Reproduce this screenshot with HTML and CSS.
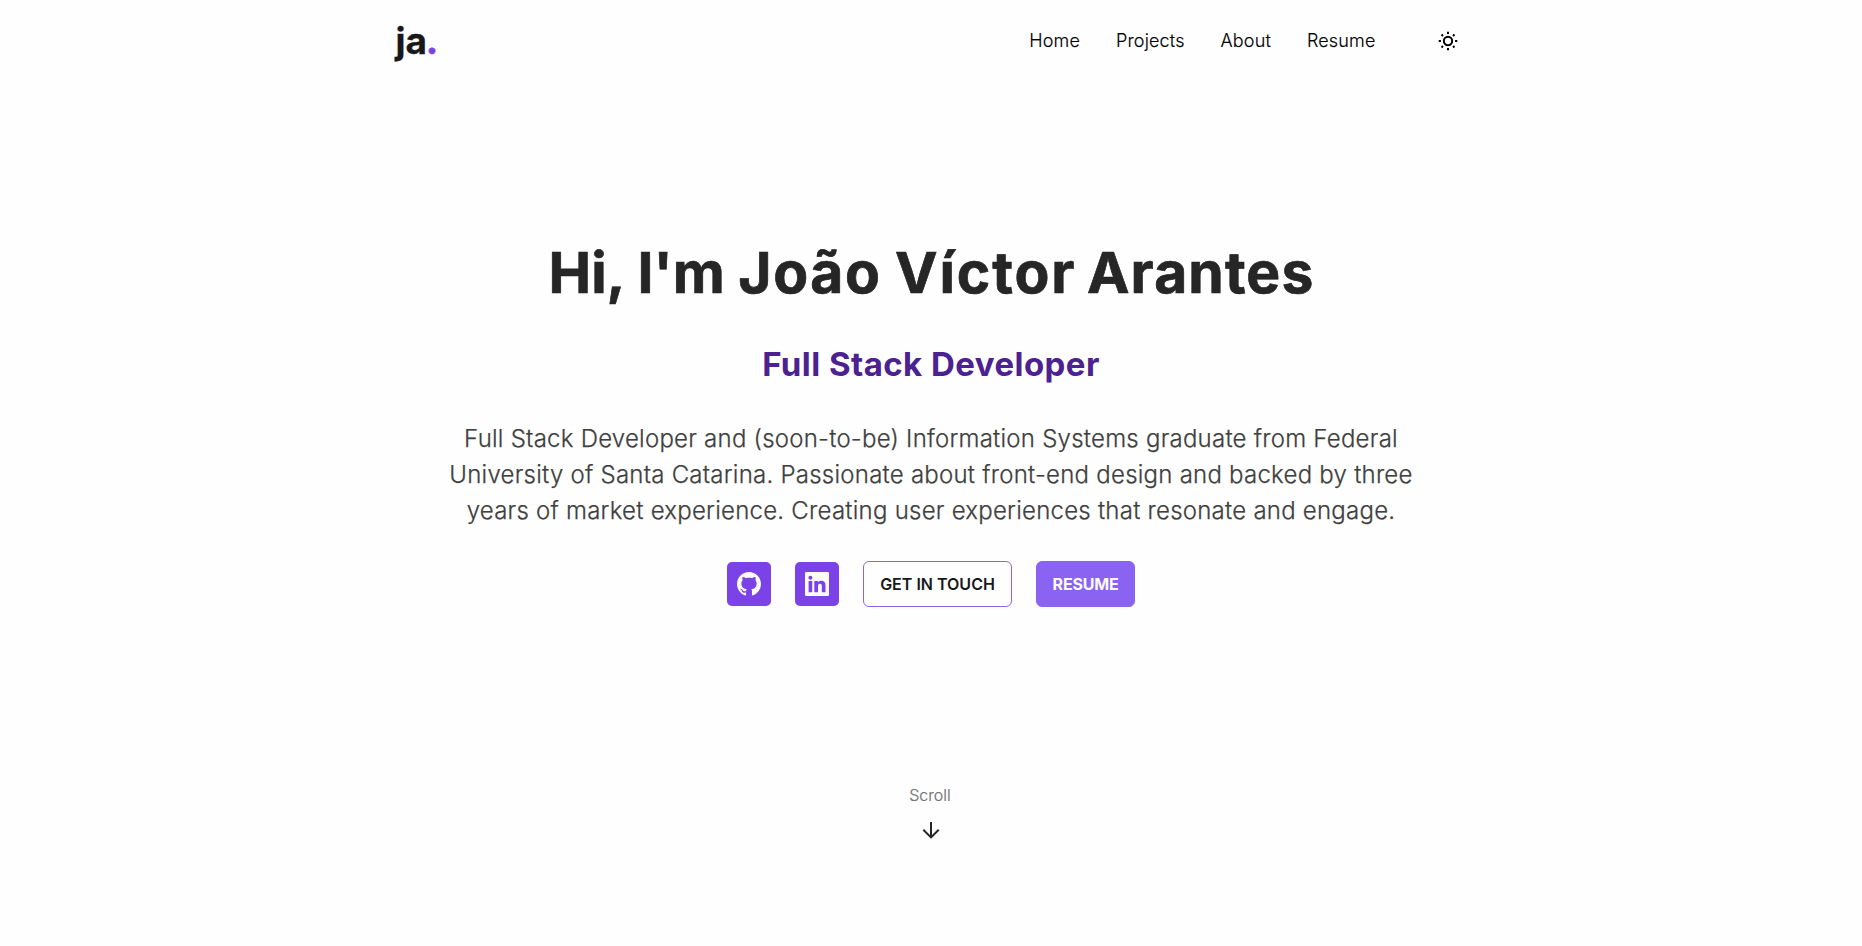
FILE: index.html
```html
<!DOCTYPE html>
<html lang="en">
<head>
<meta charset="utf-8">
<title>João Víctor Arantes</title>
<link rel="stylesheet" href="styles.css">
</head>
<body>
<header class="header">
  <a class="logo">ja<span class="logo-dot">.</span></a>
  <nav class="nav">
    <a>Home</a><a>Projects</a><a>About</a><a>Resume</a>
    <svg class="theme" viewBox="0 0 24 24" fill="none" stroke="currentColor" stroke-width="2.4"><circle cx="12" cy="12" r="5"/><path d="M12 .9v2.600M12 20.500v2.600M.9 12h2.600M20.500 12h2.600M4.200 4.200l1.800 1.800M18 18l1.800 1.800M4.200 19.800l1.800-1.800M18 6l1.800-1.800"/></svg>
  </nav>
</header>
<main class="hero">
  <h1 class="title">Hi, I'm <span class="first">João</span> <span class="middle">Víctor</span> <span class="last">Arantes</span></h1>
  <h2 class="role">Full Stack Developer</h2>
  <p class="bio">Full Stack Developer and (soon-to-be) Information Systems graduate from Federal University of Santa Catarina. Passionate about front-end design and backed by three years of market experience. Creating user experiences that resonate and engage.</p>
  <div class="actions">
    <a class="social"><svg viewBox="0 0 16 16" fill="currentColor"><path d="M8 0C3.580 0 0 3.580 0 8c0 3.540 2.290 6.530 5.470 7.590.4.070.55-.17.55-.38 0-.19-.01-.82-.01-1.490-2.010.37-2.530-.49-2.690-.94-.09-.23-.48-.94-.82-1.130-.28-.15-.68-.52-.01-.53.63-.01 1.080.58 1.230.82.72 1.210 1.870.87 2.330.66.07-.52.28-.87.51-1.070-1.780-.2-3.640-.89-3.640-3.950 0-.87.31-1.590.82-2.150-.08-.2-.36-1.020.08-2.120 0 0 .67-.21 2.200.82.64-.18 1.320-.27 2-.27s1.360.09 2 .27c1.530-1.040 2.200-.82 2.200-.82.44 1.100.16 1.920.08 2.120.51.56.82 1.270.82 2.150 0 3.070-1.870 3.750-3.650 3.950.29.25.54.73.54 1.480 0 1.070-.01 1.930-.01 2.200 0 .21.15.46.55.38A8.010 8.010 0 0 0 16 8c0-4.420-3.580-8-8-8z"/></svg></a>
    <a class="social"><svg viewBox="0 0 24 24" fill="currentColor"><path fill-rule="evenodd" d="M1.200 0H22.800Q24 0 24 1.200V22.800Q24 24 22.800 24H1.200Q0 24 0 22.800V1.200Q0 0 1.200 0ZM3.600 9V20.200H7.200V9ZM5.400 3.800a2 2 0 1 0 0 4a2 2 0 1 0 0-4ZM9.350 9V20.200H13V14.600c0-1.500.3-2.750 2.050-2.750c1.750 0 1.760 1.600 1.760 2.850V20.200H20.500V14c0-3-.67-5.280-4.300-5.280c-1.730 0-2.800.85-3.270 1.750h-.06V9Z"/></svg></a>
    <a class="btn btn-outline">GET IN TOUCH</a>
    <a class="btn btn-solid">RESUME</a>
  </div>
</main>
<div class="scroll">
  <span class="scroll-label">Scroll</span>
  <svg class="arrow" viewBox="0 0 24 24" fill="none" stroke="currentColor" stroke-width="2"><path d="M12 4v15.500M4.300 11.700l7.700 7.700 7.700-7.700"/></svg>
</div>
</body>
</html>
```

FILE: styles.css
```css
* { box-sizing: border-box; }
body {
  margin: 0;
  min-height: 946px;
  background: #fefefe;
  color: #18181b;
  font-family: Inter, "Liberation Sans", sans-serif;
}
.header {
  display: flex;
  justify-content: space-between;
  align-items: center;
  width: 1071px;
  height: 82px;
  margin: 0 auto;
  padding-right: 9px;
}
.logo { font-size: 37px; font-weight: 700; line-height: 40px; -webkit-text-stroke: .3px; }
.logo-dot { color: #7b42e8; font-family: Lato, sans-serif; font-size: 42px; line-height: 1px; -webkit-text-stroke: .5px; }
.nav {
  display: flex;
  align-items: center;
  padding-bottom: 1px;
  font-size: 18px;
  font-weight: 300;
  letter-spacing: .15px;
  color: #000;
  -webkit-text-stroke: .15px;
}
.nav a { margin-right: 36px; }
.theme { width: 20px; height: 20px; margin-left: 26px; }
.hero { display: flex; flex-direction: column; align-items: center; padding-top: 155px; text-align: center; }
.title {
  margin: 0;
  font-size: 57px;
  font-weight: 700;
  line-height: 72px;
  color: #262626;
  white-space: nowrap;
  -webkit-text-stroke: .7px;
}
.first { letter-spacing: 1.6px; }
.middle { letter-spacing: 1.9px; margin-right: -3px; }
.last { letter-spacing: 1.1px; margin-right: -1px; }
.role {
  margin: 35px 0 0;
  font-size: 33px;
  font-weight: 700;
  line-height: 40px;
  letter-spacing: .45px;
  color: #4c2190;
}
.bio {
  width: 1000px;
  margin: 37px 0 0;
  font-size: 24px;
  font-weight: 300;
  line-height: 36px;
  letter-spacing: .24px;
  color: #404040;
  -webkit-text-stroke: .25px;
}
.actions { display: flex; align-items: center; gap: 24px; margin-top: 32px; }
.social {
  display: flex;
  align-items: center;
  justify-content: center;
  width: 44px;
  height: 44px;
  border-radius: 5px;
  background: #7b42e8;
  color: #fafafa;
}
.social svg { width: 24px; height: 24px; }
.btn {
  height: 46px;
  border: 1px solid #8b63f2;
  border-radius: 6px;
  font-size: 16px;
  font-weight: 600;
  line-height: 44px;
  white-space: nowrap;
}
.btn-outline { width: 149px; }
.btn-solid { width: 99px; background: #8b63f2; color: #fafafa; font-weight: 700; letter-spacing: -.2px; }
.scroll {
  display: flex;
  flex-direction: column;
  align-items: center;
  gap: 11px;
  margin-top: 176px;
  font-size: 16px;
  font-weight: 300;
  line-height: 24px;
  color: #737373;
  -webkit-text-stroke: .2px;
}
.scroll-label { padding-right: 2px; }
.arrow { width: 24px; height: 24px; color: #262626; }
```
